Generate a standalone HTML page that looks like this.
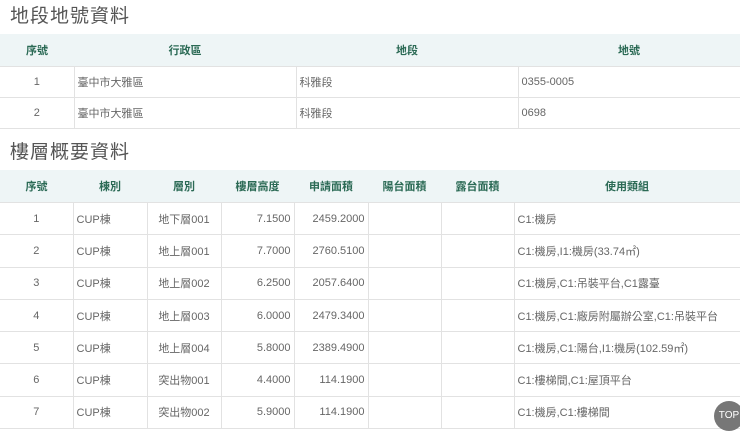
<!DOCTYPE html>
<html><head><meta charset="utf-8"><style>
body{margin:0;width:740px;height:429px;overflow:hidden;background:#fff;font-family:"Liberation Sans","Noto Sans CJK TC",sans-serif;color:#666;font-size:11px;position:relative}
h2{margin:0;position:absolute;left:10px;font-weight:400;font-size:19px;color:#555;letter-spacing:1px}
table{position:absolute;left:0;width:740px;border-collapse:collapse;table-layout:fixed}
th{background:#eef5f6;color:#2b6a55;font-weight:700;font-size:11px;height:32px;padding:0}
td{border:1px solid #e2e2e2;padding:0 3px;height:30px;white-space:nowrap}
#t2 td{height:31.3px}
td:first-child{border-left:none}td:last-child{border-right:none}
.c{text-align:center}.r{text-align:right}
.top{position:absolute;left:714px;top:401px;width:30px;height:30px;border-radius:50%;background:#777;color:#fff;font-size:10px;line-height:30px;text-align:center}
</style></head><body>
<h2 style="top:1px">地段地號資料</h2>
<table style="top:34px">
<colgroup><col style="width:74px"><col style="width:222px"><col style="width:222px"><col></colgroup>
<tr><th>序號</th><th>行政區</th><th>地段</th><th>地號</th></tr>
<tr><td class="c">1</td><td>臺中市大雅區</td><td>科雅段</td><td>0355-0005</td></tr>
<tr><td class="c">2</td><td>臺中市大雅區</td><td>科雅段</td><td>0698</td></tr>
</table>
<h2 style="top:137px">樓層概要資料</h2>
<table id="t2" style="top:170px">
<colgroup><col style="width:73px"><col style="width:74px"><col style="width:74px"><col style="width:73px"><col style="width:74px"><col style="width:73px"><col style="width:73px"><col></colgroup>
<tr><th>序號</th><th>棟別</th><th>層別</th><th>樓層高度</th><th>申請面積</th><th>陽台面積</th><th>露台面積</th><th>使用類組</th></tr>
<tr><td class="c">1</td><td>CUP棟</td><td class="c">地下層001</td><td class="r">7.1500</td><td class="r">2459.2000</td><td></td><td></td><td>C1:機房</td></tr>
<tr><td class="c">2</td><td>CUP棟</td><td class="c">地上層001</td><td class="r">7.7000</td><td class="r">2760.5100</td><td></td><td></td><td>C1:機房,I1:機房(33.74㎡)</td></tr>
<tr><td class="c">3</td><td>CUP棟</td><td class="c">地上層002</td><td class="r">6.2500</td><td class="r">2057.6400</td><td></td><td></td><td>C1:機房,C1:吊裝平台,C1露臺</td></tr>
<tr><td class="c">4</td><td>CUP棟</td><td class="c">地上層003</td><td class="r">6.0000</td><td class="r">2479.3400</td><td></td><td></td><td>C1:機房,C1:廠房附屬辦公室,C1:吊裝平台</td></tr>
<tr><td class="c">5</td><td>CUP棟</td><td class="c">地上層004</td><td class="r">5.8000</td><td class="r">2389.4900</td><td></td><td></td><td>C1:機房,C1:陽台,I1:機房(102.59㎡)</td></tr>
<tr><td class="c">6</td><td>CUP棟</td><td class="c">突出物001</td><td class="r">4.4000</td><td class="r">114.1900</td><td></td><td></td><td>C1:樓梯間,C1:屋頂平台</td></tr>
<tr><td class="c">7</td><td>CUP棟</td><td class="c">突出物002</td><td class="r">5.9000</td><td class="r">114.1900</td><td></td><td></td><td>C1:機房,C1:樓梯間</td></tr>
</table>
<div class="top">TOP</div>
</body></html>
